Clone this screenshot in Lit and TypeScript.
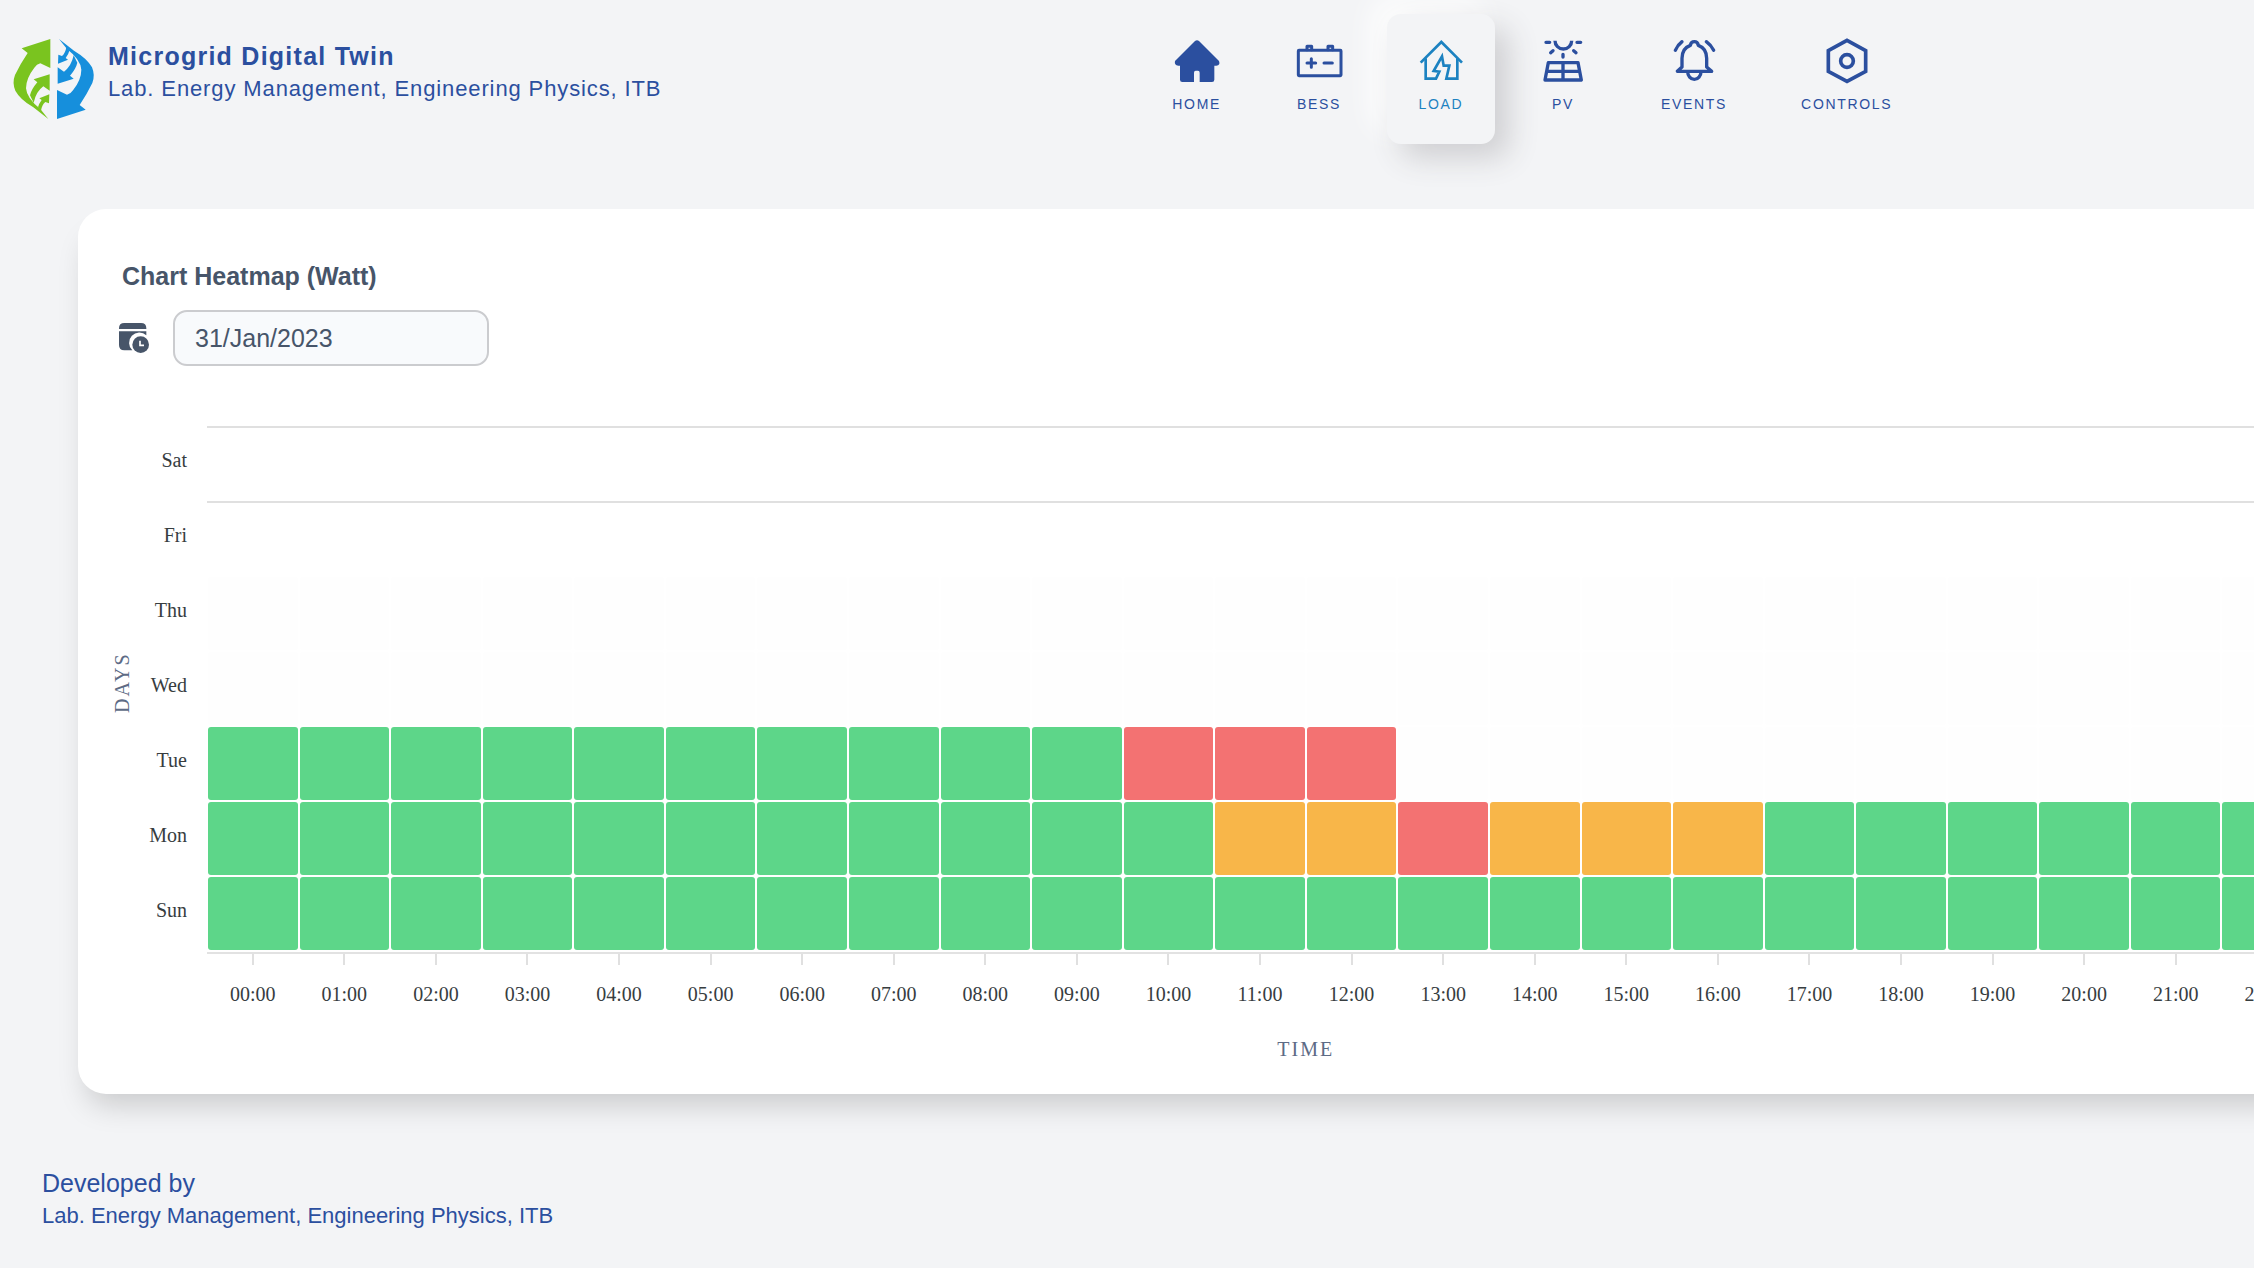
import { LitElement, html, svg, css, nothing, type SVGTemplateResult } from "lit";
import { customElement, property } from "lit/decorators.js";
import { classMap } from "lit/directives/class-map.js";

/* ---------- icons ---------- */

const ICONS: Record<string, SVGTemplateResult> = {
  home: svg`<path fill="currentColor" d="M66 12Q72 7 78 12L138 72Q143 85 130 86H124V128Q124 135 117 135H80V107Q80 101 75 101H68Q63 101 63 107V135H28Q21 135 21 128V86H16Q3 85 6 72Z"/>`,
  battery: svg`<g fill="none" stroke="currentColor" stroke-width="9" stroke-linecap="round" stroke-linejoin="round">
    <rect x="10" y="40" width="128" height="76" rx="2"/>
    <path d="M36 38V28H50V38M99 38V28H113V38"/>
    <path d="M36 78H62M49 65V91M87 78H112"/></g>`,
  load: svg`<g fill="none" stroke="currentColor" stroke-width="8">
    <path d="M11 77L73 15L135 77"/>
    <path d="M26 64V125H57L67 104L50 102L75 58L80 86H97L88 125H121V64"/></g>`,
  solar: svg`<g fill="none" stroke="currentColor" stroke-width="10" stroke-linecap="round" stroke-linejoin="round">
    <path d="M21 16H32M114 16H125M42 41L35 47M104 41L111 47M72 52V60"/>
    <path stroke-linecap="butt" d="M48 11a25 25 0 0 0 50 0"/>
    <path d="M28 77H117L127 129H18ZM24 103H121M72 77V129"/></g>`,
  bell: svg`<g fill="none" stroke="currentColor" stroke-width="10" stroke-linecap="round" stroke-linejoin="round">
    <path d="M22 103L36 90V64Q36 34 61 25Q63 14 73 14Q83 14 85 25Q110 34 110 64V90L125 103Z"/>
    <path stroke-linecap="butt" d="M53 104a20 23 0 0 0 40 0"/>
    <path d="M36 14Q23 24 16 40M109 14Q123 24 131 40"/></g>`,
  controls: svg`<g fill="none" stroke="currentColor" stroke-width="11">
    <path d="M72 10L128 41V103L72 133L16 103V41Z"/><circle cx="72" cy="72" r="19"/></g>`,
};

const ARROWS = svg`
  <path d="M151 57L65 85L83 99Q62 130 45 165Q36 188 46 212Q60 238 100 262L145 297L121 267Q80 235 78 205Q78 175 103 143Q110 132 121 130L151 144Z"/>
  <path d="M149 163L101 178L112 187Q94 208 90 226L101 248Q108 215 130 199L149 212Z"/>
  <path d="M148 223L118 235L125 240Q116 252 114 262L123 272Q126 254 136 246L147 250Z"/>`;

@customElement("nav-tile")
class NavTile extends LitElement {
  @property() icon = "home";
  @property() label = "";
  @property({ type: Boolean }) active = false;

  static styles = css`
    :host { display: block; }
    .tile {
      box-sizing: border-box;
      display: flex;
      flex-direction: column;
      align-items: center;
      min-width: 108px;
      height: 130px;
      padding: 23px 30px 0;
      border-radius: 14px;
      color: #2b4f9f;
      text-decoration: none;
      font-size: 14px;
      line-height: 20px;
      letter-spacing: 0.12em;
    }
    .active {
      color: #1c82c1;
      background: #f3f4f6;
      box-shadow: 14px 14px 30px #cfcfd2, -14px -14px 30px #fefefe;
    }
    svg { width: 48px; height: 48px; margin-bottom: 9px; }
  `;

  render() {
    return html`<a class=${classMap({ tile: true, active: this.active })} href="#"
      aria-current=${this.active ? "page" : nothing}>
      <svg viewBox="0 0 144 144" aria-hidden="true">${ICONS[this.icon]}</svg>
      <span>${this.label}</span>
    </a>`;
  }
}

/* ---------- heatmap ---------- */

// g: low load, o: medium, r: high, ".": no reading
const ROWS: Array<[string, string]> = [
  ["Sat", ""],
  ["Fri", ""],
  ["Thu", "........................"],
  ["Wed", "........................"],
  ["Tue", "ggggggggggrrr..........."],
  ["Mon", "gggggggggggooroooggggggg"],
  ["Sun", "gggggggggggggggggggggggg"],
];
const LEVELS: Record<string, string> = { g: "low", o: "medium", r: "high", ".": "none" };
const HOURS = Array.from({ length: 24 }, (_, h) => `${String(h).padStart(2, "0")}:00`);

@customElement("load-heatmap")
class LoadHeatmap extends LitElement {
  static styles = css`
    :host {
      display: grid;
      grid-template-columns: 20px 1fr;
      font-family: "Liberation Serif", "Times New Roman", serif;
      font-size: 20px;
      line-height: 24px;
      color: #373d3f;
    }
    .axis-title { color: #5d6b85; letter-spacing: 2px; }
    .days {
      writing-mode: vertical-rl;
      transform: rotate(180deg);
      line-height: 20px;
      text-align: center;
      padding-top: 12px;
    }
    .row { display: grid; grid-template-columns: 55px 1fr; column-gap: 20px; height: 75px; }
    .day { align-self: center; text-align: right; padding-bottom: 7px; }
    .cells { box-sizing: border-box; display: grid; grid-template-columns: repeat(24, 1fr); }
    .ruled { border-top: 2px solid #e0e0e0; }
    .cell { margin: 1px; border-radius: 3px; }
    .low { background: #5dd689; }
    .medium { background: #f8b649; }
    .high { background: #f37272; }
    .none { background: #fefefe; }
    .hours {
      grid-column: 2;
      margin: 1px 0 0 75px;
      border-top: 2px solid #e2e2e2;
      display: grid;
      grid-template-columns: repeat(24, 1fr);
    }
    .hour { display: flex; flex-direction: column; align-items: center; gap: 17px; }
    .hour::before { content: ""; width: 2px; height: 11px; background: #e0e0e0; }
    .time { grid-column: 2; margin: 31px 0 0 75px; text-align: center; }
  `;

  render() {
    return html`
      <div class="axis-title days">DAYS</div>
      <div>
        ${ROWS.map(([day, levels]) => html`
          <div class="row">
            <div class="day">${day}</div>
            <div class=${classMap({ cells: true, ruled: !levels })}>
              ${[...levels].map((l) => html`<div class="cell ${LEVELS[l]}"></div>`)}
            </div>
          </div>`)}
      </div>
      <div class="hours">${HOURS.map((h) => html`<div class="hour">${h}</div>`)}</div>
      <div class="axis-title time">TIME</div>
    `;
  }
}

/* ---------- page ---------- */

@customElement("app-root")
class AppRoot extends LitElement {
  static styles = css`
    :host {
      display: block;
      min-height: 100vh;
      overflow: hidden;
      background: #f3f4f6;
      font-family: "Liberation Sans", Arial, Helvetica, sans-serif;
      font-size: 25px;
      line-height: 36px;
      color: #2b4f9f;
    }
    .page { width: 116%; }
    header { display: grid; grid-template-columns: 165fr auto 100fr; padding-top: 14px; }
    .brand { display: flex; gap: 12px; padding: 23px 0 0 12px; }
    .logo { width: 84px; height: 84px; flex: none; }
    .name { margin: 0; font-size: 25px; line-height: 38px; letter-spacing: 0.05em; }
    .lab { margin: 0; font-size: 22px; line-height: 30px; }
    .brand .lab { line-height: 28px; letter-spacing: 0.04em; }
    nav { display: flex; gap: 14px; }
    .card {
      margin: 65px 78px 0;
      padding: 49px 132px 33px 34px;
      border-radius: 28px;
      background: #fff;
      box-shadow: 0 20px 30px -10px rgba(0, 0, 0, 0.18);
    }
    .title { margin: 0 0 16px 10px; font-size: 25px; line-height: 36px; color: #475569; }
    .picker { display: flex; align-items: center; gap: 24px; margin: 0 0 60px 7px; color: #475569; }
    .picker svg { width: 30px; height: 30px; }
    .date {
      box-sizing: border-box;
      width: 316px;
      height: 56px;
      padding: 0 20px;
      border: 2px solid #cbcccf;
      border-radius: 14px;
      background: #f8fafc;
      font: inherit;
      color: inherit;
    }
    label { display: flex; }
    footer { padding: 71px 42px 0; }
    .by { margin: 0; }
  `;

  render() {
    return html`<div class="page">
      <header>
        <div class="brand">
          <svg class="logo" viewBox="36 51 252 252" aria-hidden="true">
            <g fill="#7ac41f">${ARROWS}</g>
            <g fill="#168fdc" transform="rotate(180 161 177)">${ARROWS}</g>
          </svg>
          <div>
            <h1 class="name">Microgrid Digital Twin</h1>
            <p class="lab">Lab. Energy Management, Engineering Physics, ITB</p>
          </div>
        </div>
        <nav>
          <nav-tile icon="home" label="HOME"></nav-tile>
          <nav-tile icon="battery" label="BESS"></nav-tile>
          <nav-tile icon="load" label="LOAD" active></nav-tile>
          <nav-tile icon="solar" label="PV"></nav-tile>
          <nav-tile icon="bell" label="EVENTS"></nav-tile>
          <nav-tile icon="controls" label="CONTROLS"></nav-tile>
        </nav>
      </header>
      <main class="card">
        <h2 class="title">Chart Heatmap (Watt)</h2>
        <div class="picker">
          <label for="date" aria-label="Date">
            <svg viewBox="0 0 90 90" aria-hidden="true">
              <path fill="currentColor" d="M0 18V16Q0 0 16 0H66Q82 0 82 16V18Z"/>
              <path fill="currentColor" d="M0 25H82V37A30 30 0 0 0 40 82H16Q0 82 0 66Z"/>
              <circle cx="65" cy="65" r="25" fill="currentColor"/>
              <path fill="none" stroke="#fff" stroke-width="5" d="M63 53V67H75"/>
            </svg>
          </label>
          <input class="date" id="date" type="text" value="31/Jan/2023" />
        </div>
        <load-heatmap></load-heatmap>
      </main>
      <footer>
        <p class="by">Developed by</p>
        <p class="lab">Lab. Energy Management, Engineering Physics, ITB</p>
      </footer>
    </div>`;
  }
}
